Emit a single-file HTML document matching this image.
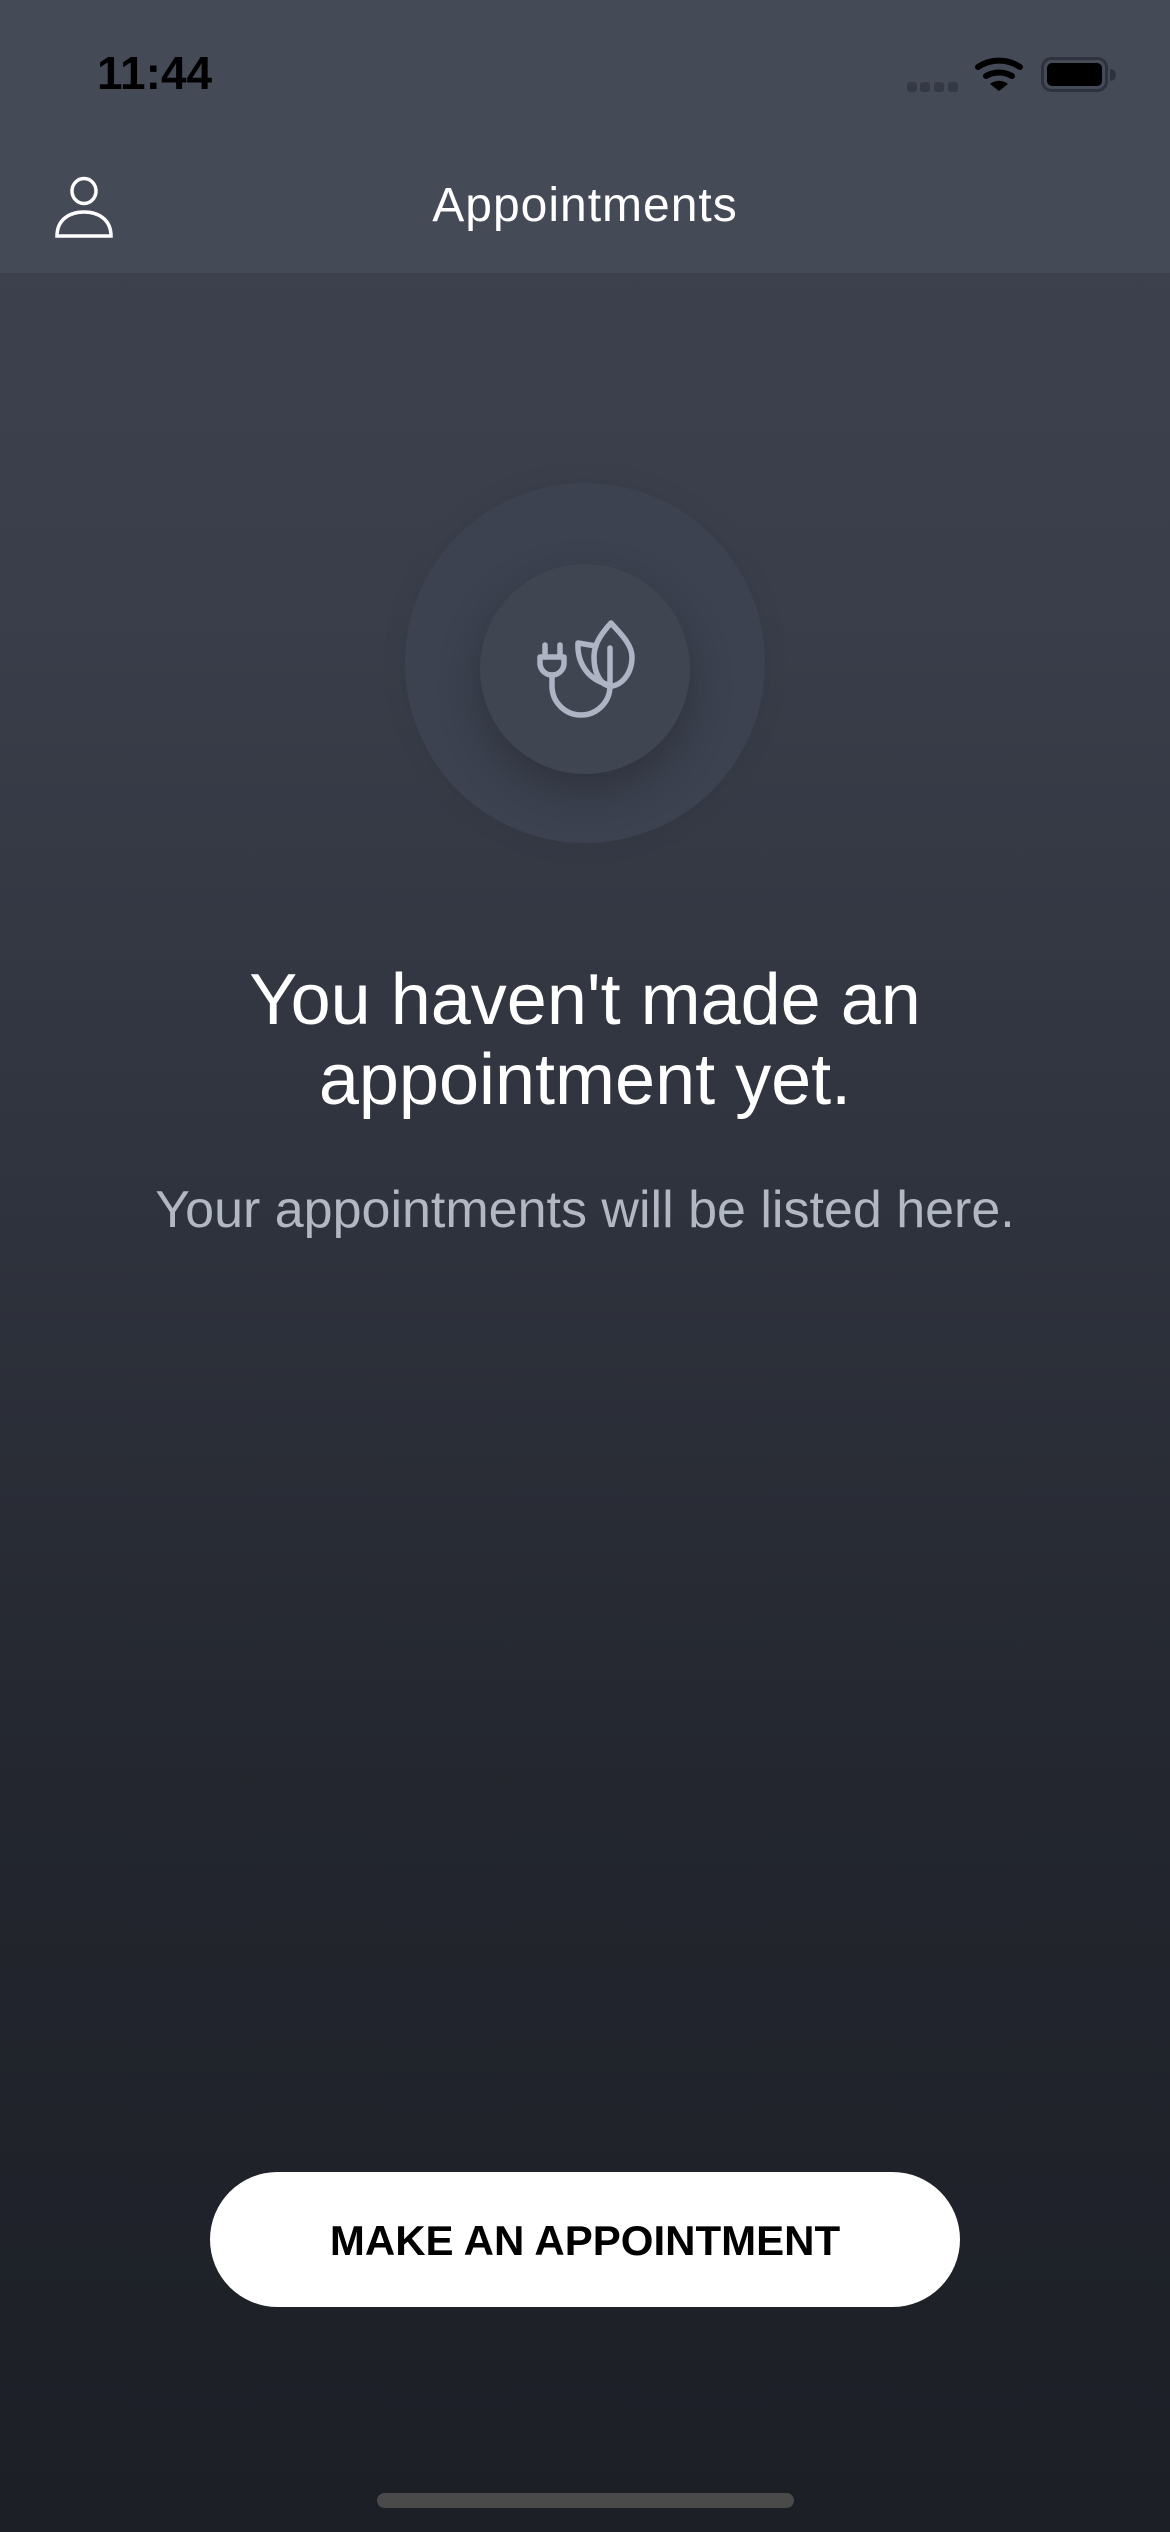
<!DOCTYPE html>
<html><head><meta charset="utf-8"><style>
html,body{margin:0;padding:0}
body{width:1170px;height:2532px;position:relative;overflow:hidden;font-family:"Liberation Sans",sans-serif;
background:linear-gradient(180deg,#3f4350 0px,#3a3e4a 600px,#2f333d 1200px,#23262e 1800px,#1c1f26 2532px);}
.hdr{position:absolute;left:0;top:0;width:1170px;height:273px;background:#444a56}
.abs{position:absolute}
.time{left:97px;top:46px;font-size:46px;font-weight:bold;color:#000;letter-spacing:0px}
.title{left:0;width:1170px;top:178px;text-align:center;color:#fff;font-size:48px;letter-spacing:1px}
.outer{left:405px;top:483px;width:360px;height:360px;border-radius:50%;background:#3d4250;box-shadow:0 0 30px rgba(0,0,0,0.06)}
.inner{left:480px;top:564px;width:210px;height:210px;border-radius:50%;background:#404552;box-shadow:0 18px 40px rgba(20,22,30,0.35)}
.h1{left:0;width:1170px;top:960px;text-align:center;color:#fff;font-size:72px;line-height:80px}
.sub{left:0;width:1170px;top:1180px;text-align:center;color:#b2b7c4;font-size:52px;font-weight:300}
.btn{left:210px;top:2172px;width:750px;height:135px;border-radius:68px;background:#fff;text-align:center;line-height:137px;font-weight:bold;font-size:42px;color:#000}
.home{left:377px;top:2493px;width:417px;height:15px;border-radius:8px;background:#4a4a4a}
</style></head><body>
<div class="hdr"></div>
<div class="abs time">11:44</div>
<svg class="abs" style="left:0;top:0" width="1170" height="273" viewBox="0 0 1170 273">
<g fill="#353945"><rect x="907" y="82" width="10" height="10" rx="3"/><rect x="920" y="82" width="10" height="10" rx="3"/><rect x="934" y="82" width="10" height="10" rx="3"/><rect x="948" y="82" width="10" height="10" rx="3"/></g>
<g fill="none" stroke="#000" stroke-width="6" stroke-linecap="round">
<path d="M978,67 A38,38 0 0 1 1020,67"/><path d="M986,76 A26,26 0 0 1 1012,76"/></g>
<path d="M990,84 L999,91 L1008,84 A14,14 0 0 0 990,84Z" fill="#000"/>
<rect x="1042.5" y="58.5" width="64" height="32" rx="9" fill="none" stroke="#2e323c" stroke-width="3"/>
<rect x="1047" y="63" width="55" height="23" rx="5" fill="#000"/>
<path d="M1110,69 A6,6 0 0 1 1110,81Z" fill="#2e323c"/>
<g fill="none" stroke="#fff" stroke-width="3.5">
<ellipse cx="84" cy="191" rx="12" ry="12.5"/>
<path d="M57,236 L111,236 C111,220 99,212 84,212 C69,212 57,220 57,236 Z"/></g>
</svg>
<div class="abs title">Appointments</div>
<div class="abs outer"></div>
<div class="abs inner"></div>
<svg class="abs" style="left:520px;top:610px" width="130" height="120" viewBox="520 610 130 120">
<g fill="none" stroke="#aeb4c3" stroke-width="5.5" stroke-linecap="round" stroke-linejoin="round">
<path d="M545,645 L545,657 M560,645 L560,657"/>
<path d="M540,657 L564,657 L564,664 A12,12 0 0 1 552,675 A12,12 0 0 1 540,664 Z"/>
<path d="M552,675 L552,686 A29,29 0 0 0 610,686 L610,648"/>
<path d="M611,623 C600,635 594,645 594,657 C594,675 602,686 611,686 C620,686 632,675 632,657 C632,645 622,635 611,623 Z"/>
<path d="M596,646 L578,643 C577,661 586,678 606,684"/>
</g></svg>
<div class="abs h1">You haven't made an<br>appointment yet.</div>
<div class="abs sub">Your appointments will be listed here.</div>
<div class="abs btn">MAKE AN APPOINTMENT</div>
<div class="abs home"></div>
</body></html>
